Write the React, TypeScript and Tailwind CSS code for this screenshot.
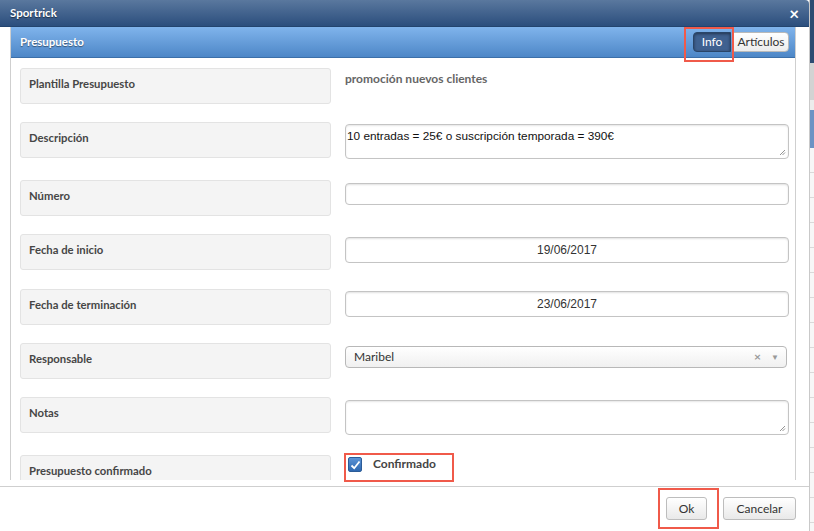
import React from "react";

const lato = { fontFamily: "Lato, 'Open Sans', sans-serif" };

function Label({ text }: { text: string }) {
  return (
    <div className="h-[36px] w-[311px] shrink-0 rounded-[3px] border border-[#e3e3e3] bg-[#f4f4f4] pl-[8px] pt-[7px] text-[11.3px] leading-[16px] font-bold text-[#464646]">
      {text}
    </div>
  );
}

function Row({ label, h, children }: { label: string; h: string; children?: React.ReactNode }) {
  return (
    <div className={`flex items-start ${h}`}>
      <Label text={label} />
      <div className="ml-[14px] w-[444px]">{children}</div>
    </div>
  );
}

const arial = "font-['Liberation_Sans',Arial,sans-serif]";

function Input({ h, value, center }: { h: string; value?: string; center?: boolean }) {
  return (
    <div
      className={`${h} ${arial} flex items-center rounded-[4px] border border-[#c4c4c4] bg-white text-[12px] text-[#333] shadow-[inset_0_1px_2px_rgba(0,0,0,0.12)] ${center ? "justify-center" : "pl-[2px]"}`}
    >
      {value}
    </div>
  );
}

function TextArea({ value }: { value?: string }) {
  return (
    <div className={`relative h-[35px] rounded-[4px] border border-[#c4c4c4] bg-white pl-[1px] pt-[3px] text-[11.8px] leading-[16px] text-[#111] shadow-[inset_0_1px_2px_rgba(0,0,0,0.1)] ${arial}`}>
      {value}
      <svg className="absolute bottom-[2px] right-[2px]" width="7" height="7" viewBox="0 0 7 7">
        <path d="M6 1L1 6M6 3.5L3.5 6" stroke="#888" strokeWidth="0.9" />
      </svg>
    </div>
  );
}

export default function App() {
  return (
    <div className="relative flex h-[531px] w-[814px] overflow-hidden bg-white" style={lato}>
      <div className="flex h-full w-[810px] flex-col border-r border-[#c9c9c9]">
        {/* title bar */}
        <div className="flex h-[27px] shrink-0 items-center justify-between rounded-tr-[4px] border-b border-[#23446e] bg-gradient-to-b from-[#5a789e] to-[#2b4e7d] pl-[10px] pr-[10px]">
          <span className="text-[11.5px] font-bold text-white [text-shadow:0_1px_1px_rgba(0,0,0,0.5)]">Sportrick</span>
          <span className="text-[17px] font-bold leading-none text-white">×</span>
        </div>

        {/* panel */}
        <div className="flex h-[453px] shrink-0 pl-[10px] pr-[13px]">
          <div className="flex w-full flex-col overflow-hidden border-x border-[#cfcfcf]">
            <div className="flex h-[31px] shrink-0 items-center justify-between border-b border-[#3c6fa8] bg-gradient-to-b from-[#80b4ec] to-[#4d87c7] pl-[9px] pr-[6px]">
              <span className="text-[11.5px] font-bold text-white [text-shadow:0_1px_1px_rgba(0,0,0,0.45)]">Presupuesto</span>
              <div className="flex h-[20px] items-stretch">
                <div className="flex w-[38px] items-center justify-center rounded-l-[4px] border border-[#2a4568] bg-[#3f6190] text-[12px] text-white shadow-[inset_0_1px_3px_rgba(0,0,0,0.45)]">
                  Info
                </div>
                <div className="ml-[2px] flex w-[56px] items-center justify-center rounded-r-[4px] border border-[#b9b9b9] bg-gradient-to-b from-white to-[#ececec] text-[12px] text-[#333]">
                  Artículos
                </div>
              </div>
            </div>

            <div className="flex flex-col pl-[9px] pt-[10px]">
              <Row label="Plantilla Presupuesto" h="h-[54px]">
                <div className="pt-[3px] text-[12px] leading-[16px] font-bold text-[#666]">promoción nuevos clientes</div>
              </Row>
              <Row label="Descripción" h="h-[58px]">
                <div className="pt-[2px]">
                  <TextArea value="10 entradas = 25€ o suscripción temporada = 390€" />
                </div>
              </Row>
              <Row label="Número" h="h-[54px]">
                <div className="pt-[3px]">
                  <Input h="h-[22px]" />
                </div>
              </Row>
              <Row label="Fecha de inicio" h="h-[55px]">
                <div className="pt-[3px]">
                  <Input h="h-[26px]" value="19/06/2017" center />
                </div>
              </Row>
              <Row label="Fecha de terminación" h="h-[54px]">
                <div className="pt-[2px]">
                  <Input h="h-[26px]" value="23/06/2017" center />
                </div>
              </Row>
              <Row label="Responsable" h="h-[54px]">
                <div className="pt-[3px] pr-[2px]">
                  <div className="flex h-[22px] items-center rounded-[4px] border border-[#b8b8b8] bg-gradient-to-b from-white to-[#f0f0f0] pl-[8px] pr-[7px] text-[12px] text-[#333]">
                    <span className="flex-1">Maribel</span>
                    <span className="mr-[10px] text-[12px] font-bold text-[#999]">×</span>
                    <span className="text-[8px] text-[#999]">▼</span>
                  </div>
                </div>
              </Row>
              <Row label="Notas" h="h-[58px]">
                <div className="pt-[3px]">
                  <TextArea />
                </div>
              </Row>
              <Row label="Presupuesto confirmado" h="h-[40px]">
                <div className="flex items-start pl-[3px] pt-[2px]">
                  <div className="flex h-[15px] w-[14px] items-center justify-center rounded-[2px] border border-[#2c5c98] bg-gradient-to-b from-[#5a93d6] to-[#2e68b0]">
                    <svg width="11" height="10" viewBox="0 0 11 10">
                      <path d="M1.5 5.5L4.2 8.2L9.5 1.5" fill="none" stroke="white" strokeWidth="1.8" />
                    </svg>
                  </div>
                  <span className="ml-[11px] text-[12px] leading-[14px] font-bold text-[#444]">Confirmado</span>
                </div>
              </Row>
            </div>
          </div>
        </div>

        {/* footer */}
        <div className="mt-[6px] flex flex-1 items-start justify-end border-t border-[#cfcfcf] pr-[13px] pt-[10px]">
          <div className="flex h-[23px] w-[41px] items-center justify-center rounded-[3px] border border-[#bdbdbd] bg-gradient-to-b from-white to-[#e9e9e9] text-[12px] text-[#333]">
            Ok
          </div>
          <div className="ml-[16px] flex h-[23px] w-[73px] items-center justify-center rounded-[3px] border border-[#bdbdbd] bg-gradient-to-b from-white to-[#e9e9e9] text-[12px] text-[#333]">
            Cancelar
          </div>
        </div>
      </div>

      {/* background page peeking out on the right */}
      <div className="flex w-[4px] flex-col">
        <div className="h-[63px] bg-[#2d4b72]" />
        <div className="h-[37px] bg-[#d3d3d3]" />
        <div className="h-[10px] bg-[#ececec]" />
        <div className="h-[38px] bg-[#6d93c4]" />
        <div className="flex-1 bg-[repeating-linear-gradient(to_bottom,#f7f7f7_0px,#f7f7f7_24px,#d9d9d9_24px,#d9d9d9_25px)]" />
      </div>

      {/* red highlight frames */}
      <div className="absolute left-[684px] top-[27px] h-[35px] w-[50px] border-2 border-[#f05a4a]" />
      <div className="absolute left-[344px] top-[453px] h-[29px] w-[110px] border-2 border-[#f05a4a]" />
      <div className="absolute left-[658px] top-[488px] h-[41px] w-[61px] border-2 border-[#f05a4a]" />
    </div>
  );
}
